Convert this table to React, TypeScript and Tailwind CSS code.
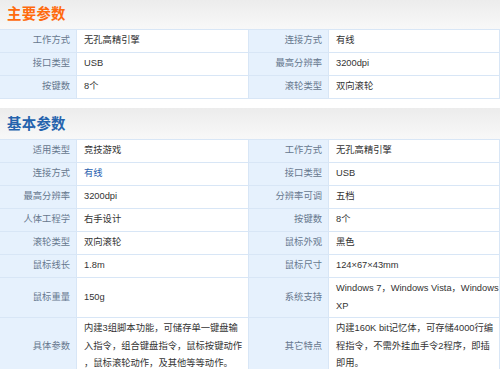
import React from "react";

type Cell = { label: string; value: React.ReactNode };
type Row = [Cell, Cell];

const mainRows: Row[] = [
  [
    { label: "工作方式", value: "无孔高精引擎" },
    { label: "连接方式", value: "有线" },
  ],
  [
    { label: "接口类型", value: "USB" },
    { label: "最高分辨率", value: "3200dpi" },
  ],
  [
    { label: "按键数", value: "8个" },
    { label: "滚轮类型", value: "双向滚轮" },
  ],
];

const Lines = ({ lines }: { lines: string[] }) => (
  <div>
    {lines.map((l, i) => (
      <div key={i} className="whitespace-nowrap">
        {l}
      </div>
    ))}
  </div>
);

const basicRows: Row[] = [
  [
    { label: "适用类型", value: "竞技游戏" },
    { label: "工作方式", value: "无孔高精引擎" },
  ],
  [
    { label: "连接方式", value: <span className="text-[#2a5faf]">有线</span> },
    { label: "接口类型", value: "USB" },
  ],
  [
    { label: "最高分辨率", value: "3200dpi" },
    { label: "分辨率可调", value: "五档" },
  ],
  [
    { label: "人体工程学", value: "右手设计" },
    { label: "按键数", value: "8个" },
  ],
  [
    { label: "滚轮类型", value: "双向滚轮" },
    { label: "鼠标外观", value: "黑色" },
  ],
  [
    { label: "鼠标线长", value: "1.8m" },
    { label: "鼠标尺寸", value: "124×67×43mm" },
  ],
  [
    { label: "鼠标重量", value: "150g" },
    {
      label: "系统支持",
      value: <Lines lines={["Windows 7，Windows Vista，Windows", "XP"]} />,
    },
  ],
  [
    {
      label: "具体参数",
      value: (
        <Lines
          lines={[
            "内建3组脚本功能，可储存单一键盘输",
            "入指令，组合键盘指令，鼠标按键动作",
            "，鼠标滚轮动作，及其他等等动作。",
          ]}
        />
      ),
    },
    {
      label: "其它特点",
      value: (
        <Lines
          lines={[
            "内建160K bit记忆体，可存储4000行编",
            "程指令，不需外挂血手令2程序，即插",
            "即用。",
          ]}
        />
      ),
    },
  ],
];

const ParamTable = ({ rows }: { rows: Row[] }) => (
  <div className="grid grid-cols-[77px_172px_80px_1fr] border-t border-[#d8e6f6]">
    {rows.map((row, i) =>
      row.map((cell, j) => (
        <React.Fragment key={`${i}-${j}`}>
          <div className="flex items-center justify-end bg-[#e6f1fd] border-r border-b border-[#d8e6f6] pr-[6px] py-[2px] min-h-[23px] text-[#66788e]">
            {cell.label}
          </div>
          <div className="flex items-center border-r border-b border-[#d8e6f6] pl-[7px] py-[2px] min-h-[23px] text-[#333]">
            {cell.value}
          </div>
        </React.Fragment>
      ))
    )}
  </div>
);

export default function App() {
  return (
    <div
      className="w-[500px] h-[369px] overflow-hidden bg-white text-[9.3px] leading-[17.5px]"
      style={{ fontFamily: '"Liberation Sans", "Noto Sans CJK SC", sans-serif' }}
    >
      <div className="h-[29px] flex items-center pl-[7px] bg-gradient-to-b from-[#ececec] to-[#f8f8f8]">
        <h2 className="text-[14.4px] font-bold text-[#ff6a0d] tracking-[0.3px]">主要参数</h2>
      </div>
      <ParamTable rows={mainRows} />

      <div className="mt-[9px] h-[31px] flex items-center pl-[7px] pt-[3px] bg-gradient-to-b from-[#ececec] to-[#f8f8f8]">
        <h2 className="text-[14.4px] font-bold text-[#2563ad] tracking-[0.3px]">基本参数</h2>
      </div>
      <ParamTable rows={basicRows} />
    </div>
  );
}
